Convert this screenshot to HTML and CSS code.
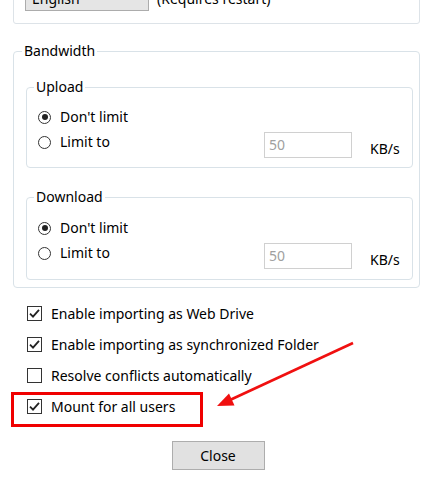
FILE: index.html
```html
<!DOCTYPE html>
<html>
<head>
<meta charset="utf-8">
<link rel="stylesheet" href="styles.css">
</head>
<body>
<div class="page">
  <div class="group-top">
    <div class="lang-row">
      <div class="select">English<span class="caret">&#711;</span></div>
      <span class="note">(Requires restart)</span>
    </div>
  </div>

  <fieldset class="box outer">
    <legend>Bandwidth</legend>
    <div class="outer-body">
      <fieldset class="box inner">
        <legend>Upload</legend>
        <div class="inner-body">
          <div class="radio-row"><span class="radio on"></span><span>Don't limit</span></div>
          <div class="limit-row">
            <div class="radio-row"><span class="radio"></span><span>Limit to</span></div>
            <div class="num">50</div>
            <div class="unit">KB/s</div>
          </div>
        </div>
      </fieldset>
      <fieldset class="box inner second">
        <legend>Download</legend>
        <div class="inner-body">
          <div class="radio-row"><span class="radio on"></span><span>Don't limit</span></div>
          <div class="limit-row">
            <div class="radio-row"><span class="radio"></span><span>Limit to</span></div>
            <div class="num">50</div>
            <div class="unit">KB/s</div>
          </div>
        </div>
      </fieldset>
    </div>
  </fieldset>

  <div class="checks">
    <div class="check-row"><span class="cb"><svg viewBox="0 0 15 15" width="15" height="15"><path d="M3 7.6 L6 10.6 L12 3.8" fill="none" stroke="#222" stroke-width="1.8"/></svg></span><span>Enable importing as Web Drive</span></div>
    <div class="check-row"><span class="cb"><svg viewBox="0 0 15 15" width="15" height="15"><path d="M3 7.6 L6 10.6 L12 3.8" fill="none" stroke="#222" stroke-width="1.8"/></svg></span><span>Enable importing as synchronized Folder</span></div>
    <div class="check-row"><span class="cb"></span><span>Resolve conflicts automatically</span></div>
    <div class="check-row"><span class="cb"><svg viewBox="0 0 15 15" width="15" height="15"><path d="M3 7.6 L6 10.6 L12 3.8" fill="none" stroke="#222" stroke-width="1.8"/></svg></span><span>Mount for all users</span></div>
    <div class="highlight"></div>
  </div>

  <div class="actions">
    <button class="btn">Close</button>
  </div>

  <svg class="arrow" width="436" height="492" viewBox="0 0 436 492">
    <line x1="353" y1="343" x2="231" y2="399.5" stroke="#f01010" stroke-width="2.6"/>
    <polygon points="217,406 229,393.5 234.5,405.5" fill="#f01010"/>
  </svg>
</div>
</body>
</html>
```

FILE: styles.css
```css
html, body {
  margin: 0;
  padding: 0;
  background: #ffffff;
}
body {
  font-family: "Noto Sans", "Open Sans", sans-serif;
  font-size: 14px;
  color: #000;
  overflow: hidden;
  width: 436px;
  height: 492px;
}
.page {
  position: relative;
  display: flow-root;
  padding: 0 16px 0 13px;
  height: 492px;
  box-sizing: border-box;
}
.group-top {
  margin-top: -30px;
  height: 54px;
  border: 1px solid #dde3e8;
  border-radius: 3px;
  display: flex;
  align-items: flex-end;
  padding: 0 0 12px 11px;
  box-sizing: border-box;
}
.lang-row {
  display: flex;
  align-items: center;
  gap: 8px;
}
.select {
  width: 124px;
  height: 24px;
  box-sizing: border-box;
  border: 1px solid #acacac;
  background: #e5e5e5;
  padding: 0 6px;
  line-height: 22px;
  display: flex;
  justify-content: space-between;
}
.caret { font-size: 12px; color: #555; }
.note { line-height: 22px; }

.box {
  margin: 0;
  padding: 0;
  border: 1px solid #d9e2e8;
  border-radius: 4px;
  min-width: 0;
}
.box legend {
  padding: 0 2px;
  margin-left: 8px;
  line-height: 18px;
  font-size: 14px;
}
.outer {
  margin-top: 18px;
}
.outer-body {
  padding: 18px 6px 7px 12px;
}
.inner legend {
  margin-left: 7px;
}
.inner.second {
  margin-top: 20px;
}
.inner-body {
  padding: 11px 0 9px 11px;
  display: flex;
  flex-direction: column;
  gap: 5px;
}
.second .inner-body { padding: 12px 0 10px 11px; }
.radio-row {
  display: flex;
  align-items: center;
  gap: 9px;
  height: 20px;
  line-height: 20px;
}
.radio {
  width: 13px;
  height: 13px;
  border: 1px solid #333;
  border-radius: 50%;
  box-sizing: border-box;
  position: relative;
  background: #fff;
}
.radio.on::after {
  content: "";
  position: absolute;
  left: 2.5px;
  top: 2.5px;
  width: 6px;
  height: 6px;
  border-radius: 50%;
  background: #222;
}
.limit-row {
  display: grid;
  grid-template-columns: 208px 88px auto;
  column-gap: 18px;
  align-items: start;
}
.num {
  height: 26px;
  box-sizing: border-box;
  border: 1px solid #d0d0d0;
  color: #a0a0a0;
  padding: 0 4px;
  line-height: 24px;
}
.unit {
  margin-top: 8px;
  line-height: 18px;
}
.checks {
  position: relative;
  margin-top: 10px;
  padding-left: 14px;
}
.check-row {
  display: flex;
  align-items: center;
  gap: 9px;
  height: 31px;
}
.cb {
  width: 15px;
  height: 15px;
  border: 1px solid #333;
  box-sizing: border-box;
  display: flex;
  align-items: center;
  justify-content: center;
  background: #fff;
}
.cb svg { display: block; margin: -1px; }
.highlight {
  position: absolute;
  left: -2px;
  top: 94px;
  width: 192px;
  height: 35px;
  border: 3px solid #f00000;
  box-sizing: border-box;
}
.actions {
  display: flex;
  justify-content: center;
  margin-top: 19px;
  padding-left: 3px;
}
.btn {
  width: 93px;
  height: 29px;
  background: #e1e1e1;
  border: 1px solid #adadad;
  font-family: inherit;
  font-size: 14px;
  color: #000;
  padding: 0;
}
.arrow {
  position: absolute;
  left: 0;
  top: 0;
  pointer-events: none;
}
```
